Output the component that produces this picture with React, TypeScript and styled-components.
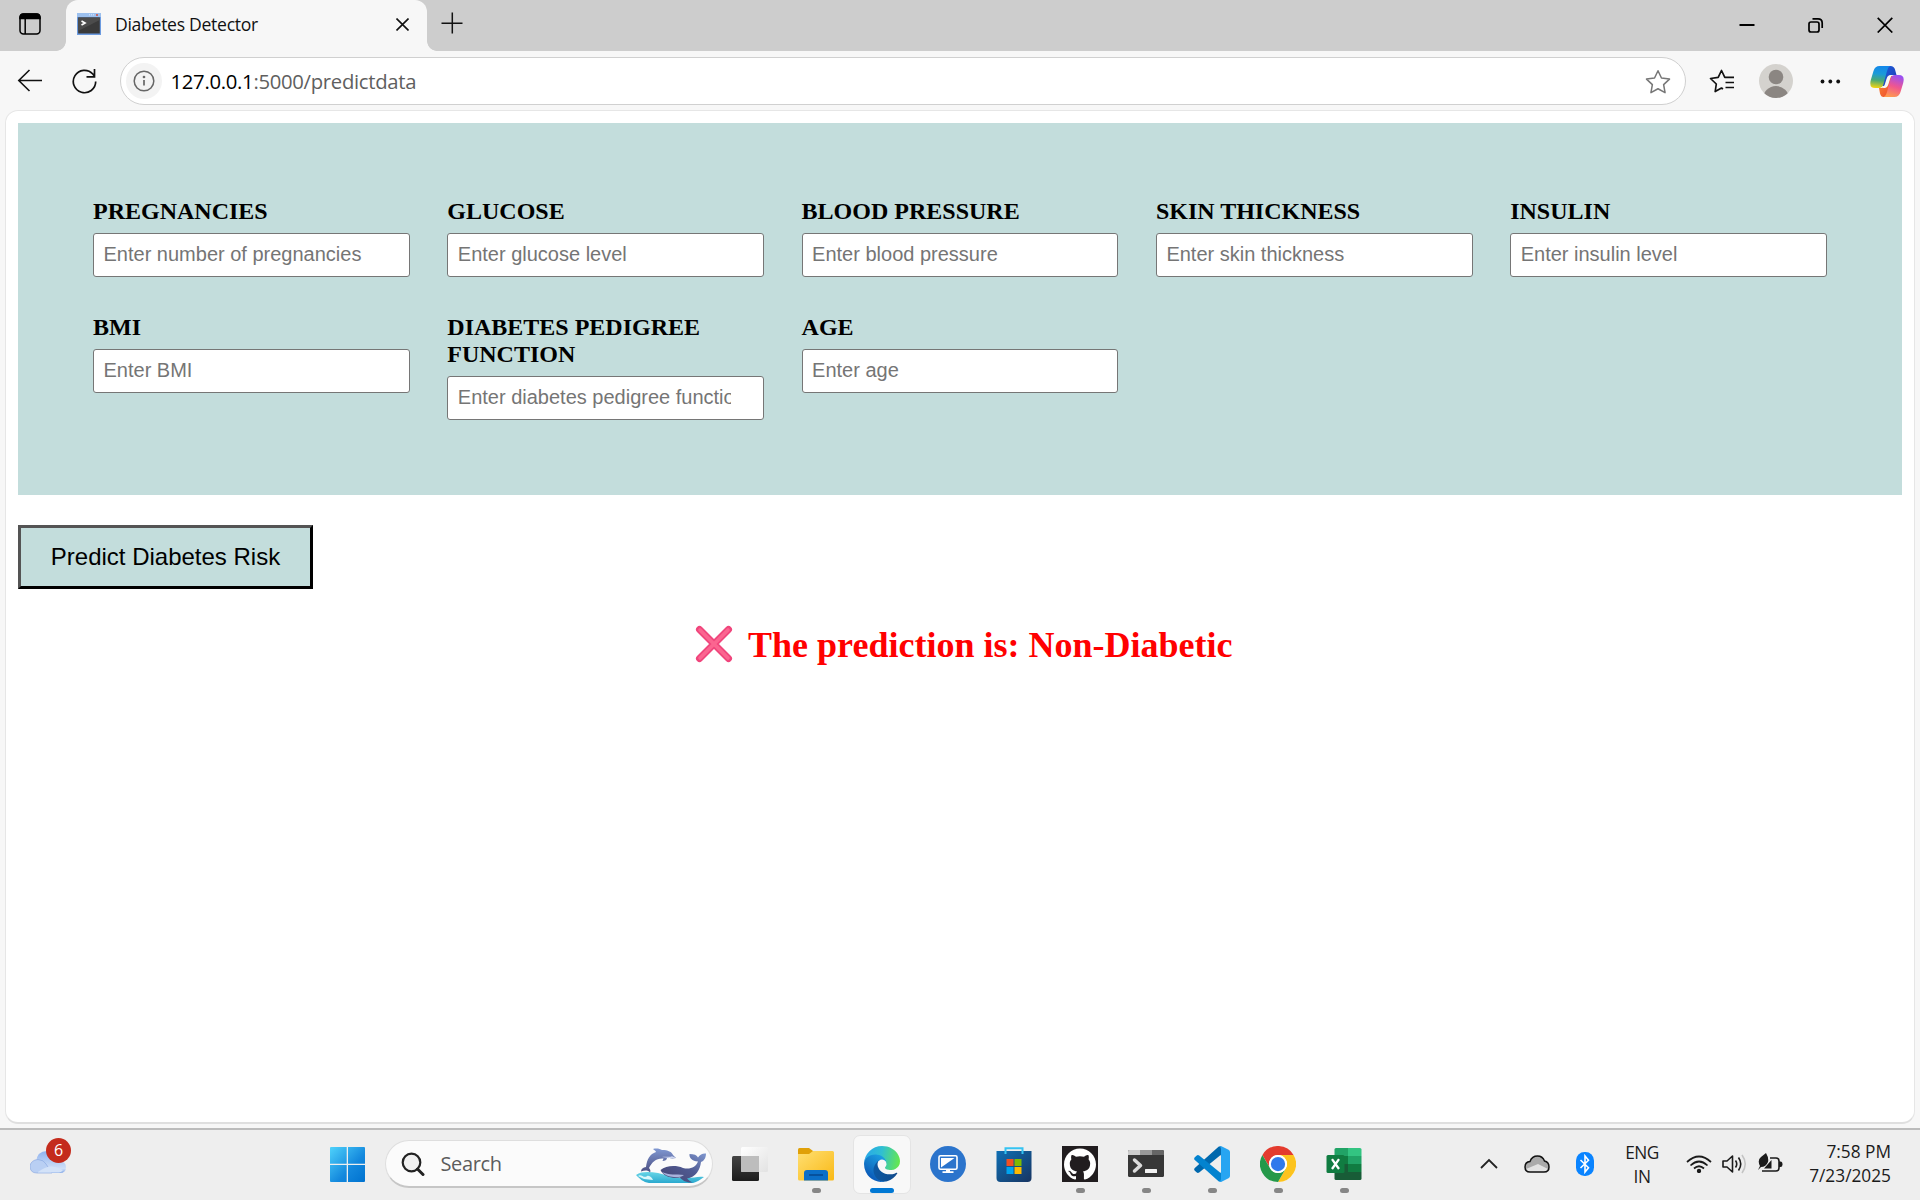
import React from 'react';
import styled, { createGlobalStyle } from 'styled-components';

const Global = createGlobalStyle`
  * { box-sizing: border-box; }
  body { margin: 0; background: #f7f7f7; }
`;
const ui = `"Open Sans", "Noto Sans", sans-serif`;

const Screen = styled.div`
  width: 1920px; height: 1200px; overflow: hidden;
  display: flex; flex-direction: column; background: #f7f7f7; font-family: ${ui};
`;

/* ---------- tab strip ---------- */
const TabStrip = styled.header`
  height: 51px; flex: none; display: flex; background: #cdcdcd;
`;
const TabMenu = styled.div`
  width: 66px; height: 51px; padding: 13px 0 0 19px; background: #cdcdcd;
  display: flex; align-items: flex-start; justify-content: space-between;
`;
const Flare = styled.span<{ $side: 'left' | 'right' }>`
  width: 10px; height: 10px; align-self: flex-end; flex: none;
  background: radial-gradient(circle at ${p => (p.$side === 'left' ? '0 0' : '100% 0')}, #cdcdcd 9.5px, #f7f7f7 10.2px);
`;
const Tab = styled.div`
  width: 361px; height: 51px; background: #f7f7f7; border-radius: 12px 12px 0 0;
  display: flex; align-items: center; padding: 0 18px 3px 11px;
`;
const TabTitle = styled.span`
  flex: 1; margin: -1px 0 0 14px; font-size: 17.6px; letter-spacing: -0.3px; color: #111; white-space: nowrap;
`;
const NewTab = styled.div`padding: 12px 0 0 4px;`;
const WindowButtons = styled.div`
  margin-left: auto; display: flex; gap: 53px; padding: 17px 27px 0 0;
`;

/* ---------- toolbar ---------- */
const Toolbar = styled.nav`
  height: 59px; flex: none; display: flex; align-items: flex-start; padding: 6px 16px 0 17px;
`;
const ToolIcon = styled.span<{ $ml?: number; $mt?: number }>`
  display: flex; flex: none; margin: ${p => p.$mt ?? 0}px 0 0 ${p => p.$ml ?? 0}px;
`;
const Omnibox = styled.div`
  width: 1566px; height: 48px; margin-left: 23px; flex: none; border: 1.5px solid #d0d0d0; border-radius: 24px;
  background: #fff; display: flex; align-items: center; padding: 0 14px 0 5px;
`;
const InfoBadge = styled.span`
  width: 36px; height: 36px; border-radius: 50%; background: #f3f3f3; display: grid; place-items: center;
`;
const Url = styled.span`
  flex: 1; margin-left: 9px; font-size: 20.3px; letter-spacing: -0.3px; color: #5f5f5f;
  b { font-weight: 400; color: #000; }
`;

/* ---------- page ---------- */
const Viewport = styled.main`
  width: 1910px; height: 1014px; flex: none; margin-left: 5px; padding: 12px;
  background: #fff; border: 1px solid #e6e6e6; border-bottom: 2px solid #dfdfdf; border-radius: 13px;
  font-family: "Liberation Serif", serif;
`;
const FormGrid = styled.section`
  height: 372px; background: #c3dddc; padding: 75px;
  display: grid; grid-template-columns: repeat(5, 1fr); gap: 37px 37.5px; align-content: start; align-items: start;
`;
const Field = styled.label`
  display: flex; flex-direction: column; gap: 8px; font-size: 24px; line-height: 27px; font-weight: 700; color: #000;
`;
const Input = styled.input`
  width: 100%; height: 44px; border: 1px solid #767676; border-radius: 3px; background: #fff;
  padding: 1px 32px 3px 9.5px; font: 20px "Liberation Sans", sans-serif; outline: none;
  &::placeholder { color: #757575; }
`;
const Predict = styled.button`
  display: block; width: 295px; height: 64px; margin-top: 30px; padding: 0; border: 3px outset #000;
  background: #c3dddc; color: #000; font: 24px "Liberation Sans", sans-serif;
`;
const Result = styled.h1`
  margin: 35px 0 0; display: flex; align-items: center; justify-content: center; gap: 15.5px;
  color: #f00; font-size: 36px; line-height: 42px; font-weight: 700; padding-left: 7px;
  svg { margin-top: -2px; }
`;

/* ---------- taskbar ---------- */
const Taskbar = styled.footer`
  margin-top: 4px; height: 72px; flex: none; border-top: 2px solid #bcbcbc; background: #eee;
  display: flex; align-items: flex-start;
`;
const Weather = styled.div`position: relative; width: 36px; margin: 20px 0 0 30px;`;
const Badge = styled.span`
  position: absolute; left: 16px; top: -12px; width: 25px; height: 25px; border-radius: 50%;
  background: #c42b1c; color: #fff; font-size: 16px; line-height: 24px; text-align: center;
`;
const Start = styled.div`margin: 17px 0 0 264px; display: flex;`;
const Search = styled.div`
  width: 328px; height: 48px; margin: 10px 0 0 20px; border: 1.5px solid #dedede; border-bottom: 2px solid #c6c6c6;
  border-radius: 24px; background: #fbfbfb; display: flex; align-items: center; padding: 0 6px 0 15px; flex: none;
  color: #5c5c5c; font-size: 20px;
  span { flex: 1; margin-left: 15.5px; letter-spacing: -0.35px; }
`;
const Apps = styled.div`display: flex; gap: 8px; margin: 5px 0 0 8px;`;
const AppSlot = styled.div<{ $active?: boolean }>`
  width: 58px; height: 59px; border-radius: 7px; display: flex; flex-direction: column; align-items: center;
  border: 1.5px solid ${p => (p.$active ? '#e4e4e4' : 'transparent')};
  background: ${p => (p.$active ? '#f8f8f8' : 'transparent')};
  padding-top: 10px; justify-content: space-between;
`;
const Running = styled.i<{ $active?: boolean }>`
  width: ${p => (p.$active ? 24 : 9)}px; height: 5px; border-radius: 3px; background: ${p => (p.$active ? '#0078d4' : '#868686')};
`;
const Tray = styled.div`
  margin-left: auto; height: 70px; display: flex; align-items: center; color: #1b1b1b; padding-right: 29px;
`;
const TrayItem = styled.span<{ $ml: number; $up?: number }>`display: flex; margin: -${p => p.$up ?? 2}px 0 0 ${p => p.$ml}px;`;
const TrayText = styled.div<{ $ml: number; $w: number; $right?: boolean; $ls?: number; $up?: number }>`
  width: ${p => p.$w}px; margin-left: ${p => p.$ml}px; margin-top: -${p => p.$up ?? 0}px; font-size: 17.3px; line-height: 24px;
  text-align: ${p => (p.$right ? 'right' : 'center')}; white-space: nowrap; letter-spacing: ${p => p.$ls ?? -0.5}px;
`;

const star = 'M12 1.6 L15.2 8.3 L22.6 9.3 L17.2 14.4 L18.5 21.8 L12 18.2 L5.5 21.8 L6.8 14.4 L1.4 9.3 L8.8 8.3 Z';

const Mascot = styled.svg`margin-top: 5px; flex: none;`;
const Dolphin = () => (
  <Mascot width="70" height="36" viewBox="0 0 70 36">
    <defs>
      <linearGradient id="dol" x1="0" y1="0" x2="0" y2="1"><stop offset="0" stopColor="#8098d2" /><stop offset="1" stopColor="#4a4d80" /></linearGradient>
      <linearGradient id="wha" x1="0" y1="1" x2="1" y2="0"><stop offset=".1" stopColor="#474775" /><stop offset=".55" stopColor="#4f5a92" /><stop offset="1" stopColor="#8098d0" /></linearGradient>
      <linearGradient id="sea" x1="0" y1="0" x2="0" y2="1"><stop offset="0" stopColor="#67d5e6" /><stop offset="1" stopColor="#2ba9cf" /></linearGradient>
    </defs>
    <path d="M0 27 C6 23 14 24 22 25 C32 28 42 30 50 30 C58 30 62 28 68 29 C64 32 61 34 57 35 H13 C7 34 4 31 0 27Z" fill="url(#sea)" />
    <path d="M2 28 C5 25 8 31 11 28 C14 27 16 30 17 32 L8 31Z" fill="#d9f7fb" />
    <path d="M10 19 C11 11 14 6 20 4 C20 3 18 2 17 1 C21 0 24 1 26 2 C32 2 36 4 37 7 L40 10 C36 11 33 10 31 10 C31 12 29 13 26.500 13 L27.500 10.500 C20 10 16 14 13 20 C14 21 15 23 14 24.500 C12 22 9 22 5 23.500 C5 21 7 19.500 10 19Z" fill="url(#dol)" />
    <path d="M30 9.500 C34 10.500 37 10.500 40 9.800 L36 8.300 C33 9.500 30 8 26 9Z" fill="#cdd6f1" />
    <path d="M24.500 22 C30 17.500 40 17 47 20 C54 22 60 19 62 13.500 C56 13 53 10 53.500 6 C58 6 61 7 62 9.500 C64 6.500 67 5 70 5.500 C70 10 68 13 65 14 C64 22 60 29 51 30.500 C52 32 55 33.500 56.500 34.500 C50 35 46 32 44 29.500 C35 31 27 28 24.500 22Z" fill="url(#wha)" />
    <path d="M26 24 C33 27.500 40 26 48 27 C44 30.500 31 30 26 24Z" fill="#a9b3dc" />
  </Mascot>
);

const apps: { name: string; running?: boolean; active?: boolean; icon: React.ReactNode }[] = [
  { name: 'Task view', icon: (
    <svg width="36" height="36" viewBox="0 0 36 36">
      <defs><linearGradient id="tv" x2="0" y2="1"><stop stopColor="#444" /><stop offset="1" stopColor="#1c1c1c" /></linearGradient>
        <linearGradient id="tw" x2="1" y2="1"><stop stopColor="#fff" /><stop offset="1" stopColor="#e2e2e2" /></linearGradient></defs>
      <rect x="0" y="10" width="27" height="25" rx="1.5" fill="url(#tv)" />
      <rect x="9" y="1" width="27" height="25" rx="1.5" fill="url(#tw)" />
      <path d="M9 10H27V26H10.5Q9 26 9 24.5Z" fill="#bdbdbd" />
    </svg>) },
  { name: 'Explorer', running: true, icon: (
    <svg width="36" height="36" viewBox="0 0 36 36">
      <defs><linearGradient id="fo" x2="1" y2="1"><stop stopColor="#ffdf72" /><stop offset="1" stopColor="#f9b916" /></linearGradient></defs>
      <path d="M0 3.5Q0 2 1.5 2H11L15 5V12H0Z" fill="#e0a008" />
      <path d="M0 8H11L15 5H34.500Q36 5 36 6.500V33Q36 34.500 34.500 34.500H1.500Q0 34.500 0 33Z" fill="url(#fo)" />
      <path d="M6 34.500V27Q6 24 9 24H27Q30 24 30 27V34.500Z" fill="#0b6fc8" />
      <path d="M11 29H25" stroke="#064a93" strokeWidth="1.600" />
    </svg>) },
  { name: 'Edge', running: true, active: true, icon: (
    <svg width="36" height="36" viewBox="0 0 256 256">
      <defs>
        <linearGradient id="ea" x1="60" y1="177" x2="241" y2="177" gradientUnits="userSpaceOnUse"><stop stopColor="#0c59a4" /><stop offset="1" stopColor="#114a8b" /></linearGradient>
        <linearGradient id="eb" x1="150" y1="90" x2="45" y2="230" gradientUnits="userSpaceOnUse"><stop stopColor="#1b9de2" /><stop offset=".5" stopColor="#147dcb" /><stop offset="1" stopColor="#0a59b8" /></linearGradient>
        <linearGradient id="ec" x1="10" y1="60" x2="250" y2="110" gradientUnits="userSpaceOnUse"><stop stopColor="#29a9e8" /><stop offset=".45" stopColor="#30bfd2" /><stop offset="1" stopColor="#65e750" /></linearGradient>
      </defs>
      <path d="M231 190.500a93.700 93.700 0 0 1-10.500 4.700 101.900 101.900 0 0 1-35.900 6.500c-47.300 0-88.500-32.500-88.500-74.300a31.500 31.500 0 0 1 16.400-27.300c-42.800 1.800-53.800 46.400-53.800 72.500 0 73.900 68.100 81.400 82.800 81.400 7.900 0 19.800-2.300 27-4.600l1.300-.4a128.300 128.300 0 0 0 66.600-52.800 4 4 0 0 0-5.400-5.700Z" fill="url(#ea)" />
      <path d="M105.700 241.400a79.200 79.200 0 0 1-22.700-21.300 80.700 80.700 0 0 1 29.500-120c3.200-1.500 8.500-4.100 15.600-4a32.400 32.400 0 0 1 25.700 13 31.900 31.900 0 0 1 6.300 18.700c0-.2 24.500-79.600-80-79.600-43.900 0-80 41.700-80 78.200a130.200 130.200 0 0 0 12.100 56 128 128 0 0 0 156.400 67 75.500 75.500 0 0 1-62.800-8Z" fill="url(#eb)" />
      <path d="M152.300 148.900c-.9 1-3.400 2.500-3.400 5.600 0 2.600 1.700 5.200 4.800 7.300 14.300 10 41.400 8.600 41.500 8.600a59.600 59.600 0 0 0 30.300-8.300 61.400 61.400 0 0 0 30.400-52.900c.3-22.400-8-37.300-11.300-43.900C223.500 23.900 177.700 0 128 0A128 128 0 0 0 0 126.200c.5-36.500 36.800-66 80-66 3.500 0 23.500.3 42 10 16.300 8.600 24.900 18.900 30.800 29.200 6.200 10.700 7.300 24.100 7.300 29.500s-2.700 13.300-7.800 20Z" fill="url(#ec)" />
    </svg>) },
  { name: 'Remote desktop', icon: (
    <svg width="36" height="36" viewBox="0 0 36 36">
      <circle cx="18" cy="18" r="18" fill="#2b74cc" />
      <rect x="9" y="9.800" width="18" height="13.500" rx="1.500" fill="none" stroke="#fff" strokeWidth="1.600" />
      <path d="M11 12H24.500L11 21.500Z" fill="#fff" /><path d="M16 23H20V25.300H23.500V27H12.500V25.300H16Z" fill="#fff" />
    </svg>) },
  { name: 'Store', icon: (
    <svg width="36" height="36" viewBox="0 0 36 36">
      <defs><linearGradient id="st" x2="1" y2="1"><stop stopColor="#0f6fb4" /><stop offset="1" stopColor="#173461" /></linearGradient></defs>
      <path d="M.5 5H35.500V32Q35.500 36 31.500 36H4.500Q.5 36 .5 32Z" fill="url(#st)" />
      <path d="M9.500 8V2.200H26.500V8" fill="none" stroke="#35c3f2" strokeWidth="2" />
      <path d="M10.500 13H17.500V20H10.500Z" fill="#f25022" /><path d="M18.500 13H25.500V20H18.500Z" fill="#7fba00" />
      <path d="M10.500 21H17.500V28H10.500Z" fill="#00a4ef" /><path d="M18.500 21H25.500V28H18.500Z" fill="#ffb900" />
    </svg>) },
  { name: 'GitHub', running: true, icon: (
    <svg width="36" height="36" viewBox="0 0 36 36">
      <rect width="36" height="36" fill="#211d1f" />
      <path transform="translate(2 2) scale(1.3333)" fill="#fff" d="M12 .297c-6.630 0-12 5.373-12 12 0 5.303 3.438 9.800 8.205 11.385.6.113.82-.258.82-.577 0-.285-.01-1.040-.015-2.040-3.338.724-4.042-1.610-4.042-1.610C4.422 18.070 3.633 17.700 3.633 17.700c-1.087-.744.084-.729.084-.729 1.205.084 1.838 1.236 1.838 1.236 1.070 1.835 2.809 1.305 3.495.998.108-.776.417-1.305.76-1.605-2.665-.3-5.466-1.332-5.466-5.930 0-1.310.465-2.380 1.235-3.220-.135-.303-.54-1.523.105-3.176 0 0 1.005-.322 3.300 1.230.96-.267 1.980-.399 3-.405 1.020.006 2.040.138 3 .405 2.280-1.552 3.285-1.230 3.285-1.230.645 1.653.24 2.873.12 3.176.765.840 1.230 1.910 1.230 3.220 0 4.610-2.805 5.625-5.475 5.920.42.360.81 1.096.81 2.220 0 1.606-.015 2.896-.015 3.286 0 .315.21.69.825.57C20.565 22.092 24 17.592 24 12.297c0-6.627-5.373-12-12-12" />
    </svg>) },
  { name: 'Terminal', running: true, icon: (
    <svg width="36" height="36" viewBox="0 0 36 36">
      <rect y="4" width="36" height="27" rx="1.500" fill="#373737" />
      <path d="M0 9V5.500Q0 4 1.500 4H12V9Z" fill="#ccc" /><path d="M12 4H24V9H12Z" fill="#999" /><path d="M24 4H34.500Q36 4 36 5.500V9H24Z" fill="#666" />
      <path d="M6.500 14L12.500 19.500L6.500 25" fill="none" stroke="#dcdcdc" strokeWidth="3.500" strokeLinecap="round" strokeLinejoin="round" />
      <rect x="17" y="23" width="12" height="4" rx=".5" fill="#f2f2f2" />
    </svg>) },
  { name: 'VS Code', running: true, icon: (
    <svg width="36" height="36" viewBox="0 0 36 36">
      <path d="M26 9.500L5.200 26.500Q3.800 27.500 2.500 26.300L.8 24.800Q-.5 23.300.8 22L24.500.8Q26 0 27.500.5V9Z" fill="#0068ad" />
      <path d="M26 26.500L5.200 9.500Q3.800 8.500 2.500 9.700L.8 11.200Q-.5 12.700.8 14L24.500 35.200Q26 36 27.500 35.500V27Z" fill="#0383cf" />
      <path d="M24.500.8Q26.500 -.3 28.500.8L34.500 3.700Q36 4.500 36 6V30Q36 31.500 34.500 32.300L28.500 35.200Q26.500 36.300 24.500 35.200Q27 35.800 27 33V3Q27 .2 24.500.8Z" fill="#27a5f2" />
    </svg>) },
  { name: 'Chrome', running: true, icon: (
    <svg width="36" height="36" viewBox="0 0 48 48">
      <circle cx="24" cy="24" r="24" fill="#fff" />
      <path d="M3.200 12A24 24 0 0 1 44.800 12H24A12 12 0 0 0 13.600 30Z" fill="#e33b2e" />
      <path d="M44.800 12A24 24 0 0 1 24 48L34.400 30A12 12 0 0 0 24 12Z" fill="#fcc31e" />
      <path d="M24 48A24 24 0 0 1 3.200 12L13.600 30A12 12 0 0 0 34.400 30Z" fill="#25994a" />
      <circle cx="24" cy="24" r="12" fill="#fff" /><circle cx="24" cy="24" r="9.500" fill="#3079ec" />
    </svg>) },
  { name: 'Excel', running: true, icon: (
    <svg width="36" height="36" viewBox="0 0 36 36">
      <path d="M8.500 3.500Q8.500 2 10 2H22V10H8.500Z" fill="#21a366" /><path d="M22 2H34Q35.500 2 35.500 3.500V10H22Z" fill="#33c481" />
      <path d="M8.500 10H22V18H8.500Z" fill="#107c41" /><path d="M22 10H35.500V18H22Z" fill="#21a366" />
      <path d="M8.500 18H22V26H8.500Z" fill="#185c37" /><path d="M22 18H35.500V26H22Z" fill="#107c41" />
      <path d="M8.500 26H35.500V32.500Q35.500 34 34 34H10Q8.500 34 8.500 32.500Z" fill="#185c37" />
      <rect x=".5" y="9" width="18" height="18" rx="1.500" fill="#107c41" />
      <path d="M6 13.200L13 23M13 13.200L6 23" stroke="#fff" strokeWidth="2.300" />
    </svg>) },
];

const fields = [
  ['PREGNANCIES', 'Enter number of pregnancies'],
  ['GLUCOSE', 'Enter glucose level'],
  ['BLOOD PRESSURE', 'Enter blood pressure'],
  ['SKIN THICKNESS', 'Enter skin thickness'],
  ['INSULIN', 'Enter insulin level'],
  ['BMI', 'Enter BMI'],
  ['DIABETES PEDIGREE FUNCTION', 'Enter diabetes pedigree function'],
  ['AGE', 'Enter age'],
];

export default function App() {
  return (
    <Screen>
      <Global />
      <TabStrip>
        <TabMenu>
          <svg width="22" height="22" viewBox="0 0 22 22" fill="none" stroke="#000" strokeWidth="1.500">
            <rect x="1" y="1" width="20" height="20" rx="3.500" />
            <path d="M1 5.500V4.500Q1 1 4.500 1H17.500Q21 1 21 4.500V5.500Z" fill="#000" /><path d="M6.200 6V21" />
          </svg>
          <Flare $side="left" />
        </TabMenu>
        <Tab>
          <svg width="24" height="22" viewBox="0 0 24 22">
            <rect width="24" height="22" fill="#6c9be0" /><rect width="24" height="4" fill="#9cc0ee" />
            <path d="M19 2h2" stroke="#d14c3c" strokeWidth="1.600" /><path d="M12 1.800h5" stroke="#dce9fa" strokeDasharray="1 1" />
            <rect x="1.200" y="4.500" width="21.600" height="16" fill="#3a3a3a" />
            <path d="M1.200 4.500H22.800V7L1.200 18Z" fill="#4c4c4c" />
            <path d="M4.500 8L8 10L4.500 12" fill="none" stroke="#fff" strokeWidth="1.700" />
          </svg>
          <TabTitle>Diabetes Detector</TabTitle>
          <svg width="13" height="13" viewBox="0 0 13 13" stroke="#111" strokeWidth="1.600"><path d="M.5 .5L12.500 12.500M12.500 .5L.5 12.500" /></svg>
        </Tab>
        <Flare $side="right" />
        <NewTab><svg width="22" height="22" viewBox="0 0 22 22" stroke="#111" strokeWidth="1.500"><path d="M11.300 .5V21.500M.5 11.300H21.500" /></svg></NewTab>
        <WindowButtons>
          <svg width="16" height="16" viewBox="0 0 16 16" stroke="#000" strokeWidth="2"><path d="M.5 8H15.500" /></svg>
          <svg width="16" height="16" viewBox="0 0 16 16" fill="none" stroke="#000" strokeWidth="1.700">
            <rect x="1" y="5" width="10" height="10" rx="2" /><path d="M4.500 1.800H10Q14.200 1.800 14.200 6V11" />
          </svg>
          <svg width="16" height="16" viewBox="0 0 16 16" stroke="#000" strokeWidth="1.700"><path d="M.7 .9L15.300 15.500M15.300 .9L.7 15.500" /></svg>
        </WindowButtons>
      </TabStrip>

      <Toolbar>
        <ToolIcon $mt={12}><svg width="26" height="23" viewBox="0 0 26 23" fill="none" stroke="#111" strokeWidth="1.600"><path d="M25 11.500H1.800M12.500 1L1.800 11.500L12.500 22" /></svg></ToolIcon>
        <ToolIcon $ml={28.5} $mt={12}><svg width="25" height="25" viewBox="0 0 25 25" fill="none" stroke="#111" strokeWidth="1.700">
          <path d="M23.700 12.500A11.200 11.200 0 1 1 20.800 5L22.500 7.200M22.500 0V7.800H14.500" /></svg></ToolIcon>
        <Omnibox>
          <InfoBadge><svg width="22" height="22" viewBox="0 0 22 22" fill="none" stroke="#666" strokeWidth="1.500"><circle cx="11" cy="11" r="9.800" /><path d="M11 10V15.500" strokeWidth="1.700" /><circle cx="11" cy="7" r=".6" fill="#666" /></svg></InfoBadge>
          <Url><b>127.0.0.1</b>:5000/predictdata</Url>
          <svg width="26" height="25" viewBox="0 0 24 23" fill="none" stroke="#777" strokeWidth="1.400" strokeLinejoin="round"><path d={star} /></svg>
        </Omnibox>
        <ToolIcon $ml={23.5} $mt={12}><svg width="26" height="25" viewBox="0 0 26 25" fill="none" stroke="#111" strokeWidth="1.700" strokeLinejoin="round">
          <path d="M14 20L12.500 19L6.200 22.500L7.300 15L1.500 9.500L9.200 8.400L12.500 1.500L15.800 8.400L25 8.400M16.500 13.500H25M16.500 18.500H25" /></svg></ToolIcon>
        <ToolIcon $ml={24} $mt={7}><svg width="34" height="34" viewBox="0 0 34 34">
          <defs><clipPath id="av"><circle cx="17" cy="17" r="17" /></clipPath></defs>
          <g clipPath="url(#av)"><rect width="34" height="34" fill="#d4d2ce" /><circle cx="17" cy="13" r="7.300" fill="#8b8682" /><circle cx="17" cy="35" r="13" fill="#8b8682" /></g></svg></ToolIcon>
        <ToolIcon $ml={27} $mt={22}><svg width="21" height="5" viewBox="0 0 21 5" fill="#111"><circle cx="2.500" cy="2.500" r="1.900" /><circle cx="10.300" cy="2.500" r="1.900" /><circle cx="18.200" cy="2.500" r="1.900" /></svg></ToolIcon>
        <ToolIcon $ml={29} $mt={9}><svg width="34" height="31" viewBox="0 0 34 31">
          <defs>
            <linearGradient id="cl" x1=".4" y1="0" x2=".3" y2="1"><stop stopColor="#1488ea" /><stop offset=".35" stopColor="#1b9ad8" /><stop offset=".65" stopColor="#4aa974" /><stop offset="1" stopColor="#f5d50e" /></linearGradient>
            <linearGradient id="cr" x1=".6" y1="0" x2=".3" y2="1"><stop stopColor="#9a50f2" /><stop offset=".5" stopColor="#f0568f" /><stop offset="1" stopColor="#ff9c4e" /></linearGradient>
            <linearGradient id="ct" x1="0" y1="0" x2="1" y2="1"><stop stopColor="#1a63e0" /><stop offset="1" stopColor="#2238b0" /></linearGradient>
            <linearGradient id="cb" x1="0" y1="0" x2="1" y2="1"><stop stopColor="#f98b32" /><stop offset="1" stopColor="#ee4630" /></linearGradient>
          </defs>
          <path d="M14 0H20.500Q24 0 25 3.500L26.500 9H23Q19.500 9 18.500 12L16 20H11Z" fill="url(#ct)" />
          <path d="M9 22H12Q14 22 15 19L18 10H23L18.500 26Q17 31 14 31H13.500Q11 31 10 27.500Z" fill="url(#cb)" />
          <path d="M22.500 9H20Q17.500 9.500 16.500 13L14.800 18.500Q13.800 21.500 12 22H15Q17.500 21.500 18.500 18L20 13Q21 9.500 22.500 9Z" fill="#f7f7f7" />
          <path d="M20 0H9.500Q5 0 3.500 5L.8 14Q-1.200 22 5 22H9Q12.500 22 13.500 18L17 5Q18 1 20 0Z" fill="url(#cl)" />
          <path d="M14 31H24.500Q29 31 30.500 26L33.200 17Q35.200 9 29 9H25Q21.500 9 20.500 13L17 26Q16 30 14 31Z" fill="url(#cr)" />
        </svg></ToolIcon>
      </Toolbar>

      <Viewport>
        <FormGrid>
          {fields.map(([label, hint]) => (
            <Field key={label}>{label}<Input placeholder={hint} /></Field>
          ))}
        </FormGrid>
        <Predict>Predict Diabetes Risk</Predict>
        <Result>
          <svg width="38" height="38" viewBox="-1 -1 38 38">
            <path d="M3.500 3.500L32.500 32.500M32.500 3.500L3.500 32.500" stroke="#f0457c" strokeWidth="7" strokeLinecap="round" />
            <path d="M4 4L32 32M32 4L4 32" stroke="#fb6590" strokeWidth="3.600" strokeLinecap="round" />
          </svg>
          The prediction is: Non-Diabetic
        </Result>
      </Viewport>

      <Taskbar>
        <Weather>
          <svg width="36" height="24" viewBox="0 0 36 24">
            <defs><linearGradient id="we" x2="0" y2="1"><stop stopColor="#8fb2ee" /><stop offset=".8" stopColor="#cfdff7" /><stop offset="1" stopColor="#86aae8" /></linearGradient></defs>
            <path d="M6 12Q7 1 17 1Q26 2 28 11Q36 11 36 17Q36 23 30 23H12Z" fill="url(#we)" />
            <path d="M7 23Q0 23 0 16Q1 10 8 9.500Q14 10 16 14L22 23Z" fill="#b9cff3" stroke="#8dabe2" strokeWidth=".7" />
            <path d="M8 22Q20 12 33 20Q31 22.600 29 22.600H8Z" fill="#d3e2f8" />
          </svg>
          <Badge>6</Badge>
        </Weather>
        <Start>
          <svg width="35" height="35" viewBox="0 0 35 35">
            <defs><linearGradient id="wi" x1="0" y1="0" x2="35" y2="35" gradientUnits="userSpaceOnUse"><stop stopColor="#4fd2fb" /><stop offset=".6" stopColor="#1388dd" /><stop offset="1" stopColor="#0072cf" /></linearGradient></defs>
            <path d="M0 1Q0 0 1 0H16.700V16.700H0ZM18 0H34Q35 0 35 1V16.700H18ZM0 18H16.700V35H1Q0 35 0 34ZM18 18H35V34Q35 35 34 35H18Z" fill="url(#wi)" />
          </svg>
        </Start>
        <Search>
          <svg width="24" height="24" viewBox="0 0 24 24" fill="none" stroke="#222" strokeWidth="2.200"><circle cx="10.500" cy="10.500" r="8.800" fill="#f0f0f0" /><path d="M16.500 17L22 22.500" strokeWidth="3" strokeLinecap="round" /></svg>
          <span>Search</span>
          <Dolphin />
        </Search>
        <Apps>
          {apps.map(a => (
            <AppSlot key={a.name} $active={a.active}>{a.icon}{a.running && <Running $active={a.active} />}</AppSlot>
          ))}
        </Apps>
        <Tray>
          <TrayItem $ml={0} $up={4}><svg width="18" height="11" viewBox="0 0 18 11" fill="none" stroke="#222" strokeWidth="1.800"><path d="M1 10L9 2L17 10" /></svg></TrayItem>
          <TrayItem $ml={26.5}><svg width="26" height="18" viewBox="0 0 26 18">
            <path d="M6 17Q1 17 1 12Q1 7 6 6.500Q8 1 13.500 1Q18.500 1 20.500 6Q25 7 25 12Q25 17 20 17Z" fill="#aaa" />
            <path d="M2 14L14 9L24 14Q23 17 20 17H6Q3 17 2 14Z" fill="#e2e2e2" />
            <path d="M6 17Q1 17 1 12Q1 7 6 6.500Q8 1 13.500 1Q18.500 1 20.500 6Q25 7 25 12Q25 17 20 17Z" fill="none" stroke="#111" strokeWidth="1.500" /></svg></TrayItem>
          <TrayItem $ml={26}><svg width="18" height="24" viewBox="0 0 18 24"><rect width="18" height="24" rx="8.500" fill="#0a84ff" /><path d="M4.500 8L12.500 15.800L9 20V4L12.500 8.200L4.500 16" fill="none" stroke="#fff" strokeWidth="1.600" /></svg></TrayItem>
          <TrayText $ml={27} $w={42}>ENG<br />IN</TrayText>
          <TrayItem $ml={23} $up={3}><svg width="26" height="18" viewBox="0 0 26 18" fill="none" stroke="#1b1b1b" strokeWidth="1.700"><path d="M1 7Q13 -4 25 7M4.500 10.500Q13 2.500 21.500 10.500M8 13.500Q13 9 18 13.500" /><circle cx="13" cy="16" r="1.300" fill="#1b1b1b" /></svg></TrayItem>
          <TrayItem $ml={10}><svg width="25" height="20" viewBox="0 0 25 20" fill="none" stroke="#1b1b1b" strokeWidth="1.600"><path d="M1 7H5L10.500 2V18L5 13H1Z" strokeLinejoin="round" /><path d="M13.500 6.500Q16 10 13.500 13.500M16.500 3.500Q21 10 16.500 16.500" /><path d="M20 1Q26.500 10 20 19" stroke="#c4c4c4" /></svg></TrayItem>
          <TrayItem $ml={11} $up={5}><svg width="25" height="20" viewBox="0 0 25 20"><path d="M12 5H18Q21 5 21 8V15Q21 18 18 18H4" fill="none" stroke="#1b1b1b" strokeWidth="1.600" /><path d="M21 8.500H22.500Q24.500 8.500 24.500 11.500Q24.500 14 22.500 14H21Z" fill="#1b1b1b" /><path d="M0 17L2 13Q-1 7 3 4L8 0Q11 5 10 9Q8 14 3 14ZM6 15.500L13.500 7V15.500Z" fill="#1b1b1b" /></svg></TrayItem>
          <TrayText $ml={16} $w={92} $right $ls={0} $up={2}>7:58 PM<br />7/23/2025</TrayText>
        </Tray>
      </Taskbar>
    </Screen>
  );
}
